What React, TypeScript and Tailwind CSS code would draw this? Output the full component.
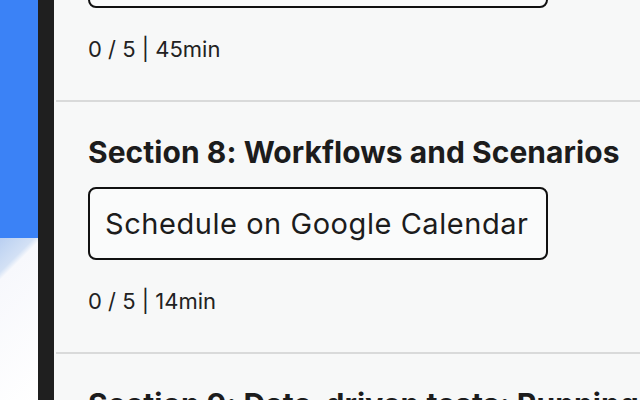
const SECTIONS = [
  { title: "Section 7: Reusable steps and components", action: "Schedule on Google Calendar", meta: "0 / 5 | 45min" },
  { title: "Section 8: Workflows and Scenarios", action: "Schedule on Google Calendar", meta: "0 / 5 | 14min" },
  { title: "Section 9: Data-driven tests: Running", action: "Schedule on Google Calendar", meta: "0 / 4 | 20min" },
];

export default function App() {
  return (
    <div className="flex h-[400px] w-[640px] overflow-hidden bg-white" style={{ fontFamily: "Inter, 'Liberation Sans', sans-serif" }}>
      {/* page behind the drawer */}
      <div className="flex w-[38px] shrink-0 flex-col">
        <div className="h-[238px] bg-[#3b82f6]" />
        <div className="flex-1 bg-[linear-gradient(135deg,#b9cff1_0%,#d3e1f5_17%,#f7f8fc_21%,#ffffff_100%)]" />
      </div>

      {/* drawer edge */}
      <div className="w-[16px] shrink-0 bg-[#1f1f1f]" />

      {/* curriculum list */}
      <div className="flex-1 overflow-hidden bg-[#f7f8f8]">
        <div className="-mt-[150px] flex flex-col">
          {SECTIONS.map((s, i) => (
            <div key={s.title}>
              {i > 0 && <div className="ml-[2px] h-[2px] bg-[#d9dada]" />}
              <div className="pl-[34px] pt-8 pb-[37px]">
                <h2 className="whitespace-nowrap text-[30px] font-bold leading-[36px] tracking-[0.05px] text-[#1c1c1c]">
                  {s.title}
                </h2>
                <button className="mt-[17px] h-[73px] whitespace-nowrap rounded-lg border-2 border-[#111] bg-white/40 pl-[15px] pr-[17px] text-[29px] leading-none tracking-[0.55px] text-[#1c1c1c]">
                  {s.action}
                </button>
                <div className="mt-[27px] text-[22px] leading-[28px] text-[#222]">{s.meta}</div>
              </div>
            </div>
          ))}
        </div>
      </div>
    </div>
  );
}
